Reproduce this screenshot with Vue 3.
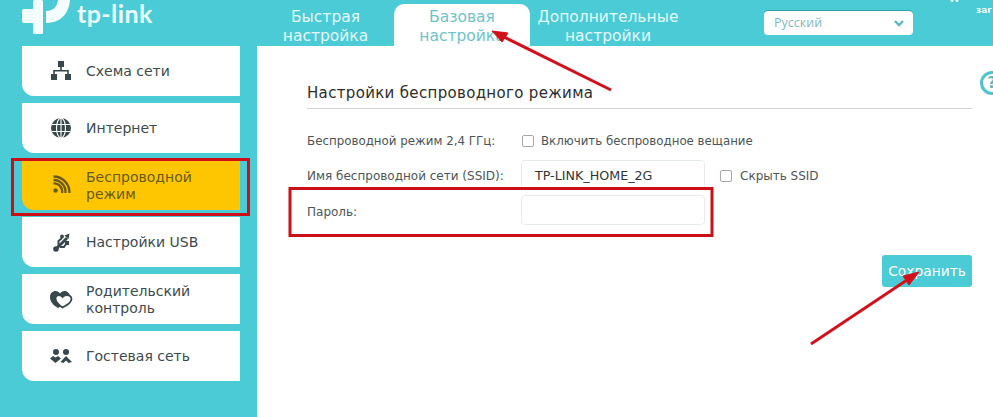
<script setup>
const tabs = [
  { id: 'quick', lines: ['Быстрая', 'настройка'] },
  { id: 'basic', lines: ['Базовая', 'настройка'], active: true },
  { id: 'adv', lines: ['Дополнительные', 'настройки'] },
]
const menu = [
  { id: 'net', lines: ['Схема сети'] },
  { id: 'inet', lines: ['Интернет'] },
  { id: 'wifi', lines: ['Беспроводной', 'режим'], active: true },
  { id: 'usb', lines: ['Настройки USB'] },
  { id: 'parent', lines: ['Родительский', 'контроль'] },
  { id: 'guest', lines: ['Гостевая сеть'] },
]
</script>

<template>
  <div class="page">
    <header class="top">
      <div class="logo">
        <svg class="logo-mark" width="52" height="36" viewBox="0 0 52 36" fill="#f4fdfe">
          <rect x="13" y="0" width="10" height="34" rx="1.500" />
          <rect x="2" y="9" width="21" height="14" rx="2" />
          <path d="M26 11 C33 11 37 7 38 0 H50 C49 14 40 23 26 23 Z" />
        </svg>
        <span class="logo-text">tp-link</span>
      </div>
      <nav class="tabs">
        <div v-for="t in tabs" :key="t.id" class="tab" :class="[t.id, { active: t.active }]">
          <span v-for="l in t.lines" :key="l">{{ l }}</span>
        </div>
      </nav>
      <div class="lang">
        <span>Русский</span>
        <svg width="12" height="8" viewBox="0 0 12 8"><path d="M2 2 L6 6 L10 2" fill="none" stroke="#5fb6c4" stroke-width="2.400" /></svg>
      </div>
      <span class="cut">заг</span>
    </header>

    <div class="body">
      <aside class="side">
        <div v-for="m in menu" :key="m.id" class="item" :class="{ active: m.active }">
          <svg class="ico" width="26" height="26" viewBox="0 0 26 26" fill="currentColor">
            <template v-if="m.id === 'net'">
              <rect x="10" y="3" width="6" height="6" />
              <rect x="3" y="16" width="6" height="6" />
              <rect x="17" y="16" width="6" height="6" />
              <path d="M12.200 9h1.600v3H20.800v4h-1.600v-2.400H6.800V16H5.200v-4h7z" />
            </template>
            <template v-else-if="m.id === 'inet'">
              <circle cx="13" cy="13" r="10" />
              <g fill="none" stroke="#fff" stroke-width="1.100">
                <ellipse cx="13" cy="13" rx="4.500" ry="10" />
                <path d="M13 3v20M3.600 9.500h18.800M3.600 16.500h18.800" />
              </g>
            </template>
            <template v-else-if="m.id === 'wifi'">
              <circle cx="7.500" cy="18.500" r="2.200" />
              <g fill="none" stroke="currentColor" stroke-width="2.300">
                <path d="M5.500 11.500a8 8 0 0 1 8.500 9.500" />
                <path d="M5.500 8a12 12 0 0 1 12 13" />
                <path d="M5.500 4.500a16 16 0 0 1 16 16.500" />
              </g>
            </template>
            <template v-else-if="m.id === 'usb'">
              <circle cx="8" cy="20" r="2.800" />
              <path d="M8 20 L19 9" fill="none" stroke="currentColor" stroke-width="2.800" />
              <path d="M16.500 6.500 L21.500 4.500 L20.500 10Z" />
              <path d="M10.500 17 V12 L14 9" fill="none" stroke="currentColor" stroke-width="2" />
              <path d="M12 18 H16 L18 15" fill="none" stroke="currentColor" stroke-width="2" />
              <rect x="17" y="12" width="4" height="4" />
              <circle cx="14" cy="7.500" r="1.900" />
            </template>
            <template v-else-if="m.id === 'parent'">
              <path d="M10 22 C5 19 2 15.500 2 11 C2 7.500 4.500 5 7.500 5 C9.500 5 11 6 12 7.500 C13 6 14.500 5 16.500 5 C19.500 5 22 7.500 22 11 C22 15.500 16 19 10 22Z" />
              <path d="M14.500 21.500 C10 18.500 7.500 16 7.500 12.500 C7.500 10.500 9 9 11 9 C12.500 9 13.800 9.800 14.600 11 C15.400 9.800 16.800 9 18.500 9 C21 9 23.500 10.500 23.500 13 C23.500 16.500 19.500 19 14.500 21.500Z" fill="#fff" stroke="currentColor" stroke-width="1.800" />
            </template>
            <template v-else>
              <circle cx="8" cy="9" r="3" />
              <circle cx="18" cy="9" r="3" />
              <path d="M2 15.500 L5 13 L7.500 14.500 L10 13 L13 15.500 L7.500 20Z" />
              <path d="M18 13 L24 19 L20.500 20 L18 17.500 L15.500 20 L12.500 19Z" />
            </template>
          </svg>
          <div class="label" :class="{ two: m.lines.length > 1 }"><span v-for="l in m.lines" :key="l">{{ l }}</span></div>
        </div>
      </aside>

      <main class="main">
        <div class="help">?</div>
        <h1 class="title">Настройки беспроводного режима</h1>
        <div class="row first">
          <label class="lbl">Беспроводной режим 2,4 ГГц:</label>
          <span class="box"></span>
          <span class="opt">Включить беспроводное вещание</span>
        </div>
        <div class="row second">
          <label class="lbl">Имя беспроводной сети (SSID):</label>
          <div class="field">TP-LINK_HOME_2G</div>
          <span class="box hide"></span>
          <span class="opt">Скрыть SSID</span>
        </div>
        <div class="row third">
          <label class="lbl">Пароль:</label>
          <div class="field"></div>
        </div>
        <div class="actions"><button class="save" type="button">Сохранить</button></div>
      </main>
    </div>

    <svg class="marks" width="993" height="417" viewBox="0 0 993 417">
      <g fill="#e6f9fb">
        <circle cx="952" cy="0.500" r="1.500" />
        <circle cx="957" cy="0.500" r="1.500" />
      </g>
      <g fill="none" stroke="#cc0f17" stroke-width="3">
        <rect x="12.500" y="159.500" width="236" height="55" />
        <rect x="290" y="188.500" width="422" height="47" />
      </g>
      <g stroke="#d3101a" stroke-width="3" fill="#d3101a">
        <line x1="611" y1="90" x2="500" y2="35" />
        <path d="M492 31 L508 33 L502 42Z" stroke-width="1" />
        <line x1="811" y1="344" x2="910" y2="278" />
        <path d="M919 272 L909 285 L903 276Z" stroke-width="1" />
      </g>
    </svg>
  </div>
</template>

<style scoped>
.page {
  position: relative;
  width: 993px;
  height: 417px;
  overflow: hidden;
  background: #4acbd6;
  font-family: "DejaVu Sans", Verdana, sans-serif;
}
.top {
  display: flex;
  height: 46px;
  position: relative;
}
.logo {
  width: 257px;
  flex: none;
  display: flex;
}
.logo-mark {
  margin-left: 20px;
  flex: none;
}
.logo-text {
  color: #eafbfd;
  font: 700 25px/27px Lato, sans-serif;
  height: 27px;
  margin-left: 5px;
  letter-spacing: 0.4px;
}
.tabs {
  display: flex;
  align-items: flex-end;
  flex: none;
}
.tab {
  display: flex;
  flex-direction: column;
  align-items: center;
  color: #e4f8fa;
  font-size: 15.500px;
  line-height: 19px;
  height: 42px;
  padding-top: 4px;
  box-sizing: border-box;
  overflow: hidden;
  white-space: nowrap;
}
.tab.quick { width: 137px; }
.tab.basic { width: 136px; }
.tab.adv { width: 156px; }
.tab.active {
  background: #fff;
  color: #6fc3c9;
  border-radius: 10px 10px 0 0;
}
.lang {
  width: 149px;
  height: 24px;
  margin: 11px 0 0 78px;
  flex: none;
  box-sizing: border-box;
  padding: 0 8px 0 10px;
  background: #fff;
  border-radius: 4px;
  box-shadow: 0 -1px 0 #2f9fae;
  display: flex;
  align-items: center;
  justify-content: space-between;
  color: #7fb7c2;
  font: 400 12.500px/1 "Open Sans", sans-serif;
}
.cut {
  position: absolute;
  left: 976px;
  top: 5px;
  color: #f0fcfd;
  font-size: 9px;
  line-height: 11px;
  font-weight: 700;
}
.body {
  display: flex;
  height: 371px;
}
.side {
  width: 257px;
  flex: none;
  box-sizing: border-box;
  padding: 0 17px 0 22px;
  display: flex;
  flex-direction: column;
  gap: 7px;
}
.item {
  height: 50px;
  flex: none;
  background: #fff;
  border-radius: 0 0 0 12px;
  display: flex;
  align-items: center;
  color: #3d4a4e;
  font-size: 14px;
  line-height: 17px;
}
.item.active {
  background: #fec600;
  color: #6a5a1c;
}
.ico {
  margin-left: 26px;
  flex: none;
  color: #37474c;
}
.active .ico { color: #6a5a14; }
.label {
  display: flex;
  flex-direction: column;
  margin-left: 12px;
}
.label.two { margin-top: 2px; }
.main {
  flex: 1;
  background: #fff;
  position: relative;
  padding: 0 21px 0 50px;
  color: #4c5558;
  font-size: 12px;
}
.help {
  position: absolute;
  left: 723px;
  top: 25px;
  width: 24px;
  height: 24px;
  box-sizing: border-box;
  border: 3px solid #4fc4d0;
  border-radius: 50%;
  color: #4fbcc9;
  font: 700 16px/18px "DejaVu Sans", sans-serif;
  text-align: center;
}
.title {
  margin: 0;
  padding: 37px 0 6px;
  height: 63px;
  box-sizing: border-box;
  border-bottom: 1px solid #d2d2d2;
  font-size: 15px;
  font-weight: 400;
  line-height: 20px;
  letter-spacing: 0.33px;
  color: #2d2d2d;
}
.row {
  display: flex;
  align-items: center;
}
.first { height: 14px; margin-top: 25px; }
.first .lbl { font-size: 11.850px; }
.first .opt { font-size: 11.800px; }
.second { height: 30px; margin-top: 12px; }
.second .lbl, .second .opt, .second .box { margin-top: 2px; }
.third { height: 30px; margin-top: 5px; }
.third .lbl { margin-top: 4px; }
.lbl {
  width: 214px;
  flex: none;
  white-space: nowrap;
}
.box {
  width: 10px;
  height: 10px;
  flex: none;
  margin: 0 7px 0 1px;
  border: 1px solid #a8a8a8;
  border-radius: 2px;
}
.box.hide { margin-left: 15px; margin-right: 8px; }
.opt { white-space: nowrap; }
.field {
  width: 184px;
  height: 30px;
  flex: none;
  box-sizing: border-box;
  padding-left: 13px;
  border: 1px solid #e6ecee;
  border-radius: 4px;
  color: #2f3638;
  font-size: 12.700px;
  line-height: 30px;
}
.actions {
  display: flex;
  justify-content: flex-end;
  margin-top: 30px;
}
.save {
  width: 90px;
  height: 32px;
  border: 0;
  padding: 0;
  border-radius: 3px;
  background: #4acbd6;
  color: #fff;
  font: 400 13.800px "DejaVu Sans", sans-serif;
}
.marks {
  position: absolute;
  left: 0;
  top: 0;
  pointer-events: none;
}
</style>
